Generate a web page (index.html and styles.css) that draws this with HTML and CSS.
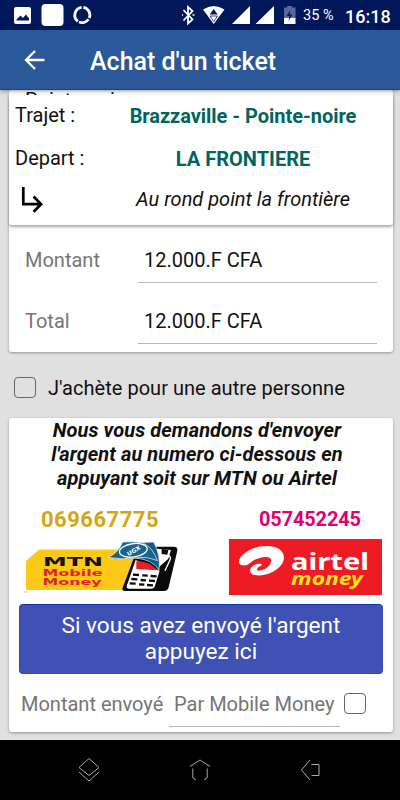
FILE: index.html
```html
<!DOCTYPE html>
<html lang="fr">

<head>
  <meta charset="UTF-8">
  <meta name="viewport" content="width=device-width, initial-scale=1.0">
  <title>Achat d'un ticket</title>
  <link rel="stylesheet" href="styles.css">
</head>

<body>
  <!-- Android status bar -->
  <div class="status-bar">
    <svg class="status-icons" width="100" height="30" viewBox="0 0 100 30">
      <rect x="14" y="7" width="17" height="17" rx="2" fill="#fff" />
      <path d="M16.5 20.500v-1l4-4 2.500 2.500 3-3.500 3 4v2z" fill="#00175a" />
      <rect x="41.500" y="4" width="22" height="22" rx="4" fill="#fff" />
      <g fill="none" stroke="#fff" stroke-width="2.800">
        <path d="M81.600 7.300A7.900 7.900 0 0 0 77.800 21.300" />
        <path d="M79 22A7.900 7.900 0 0 0 88.500 19.300" />
        <path d="M89.300 18A7.900 7.900 0 0 0 83.400 7.300" />
      </g>
    </svg>
    <svg class="status-icons right" width="118" height="30" viewBox="182 0 118 30">
      <path d="M183.500 10l9 9.500-4.500 4V7l4.500 4-9 9.500" fill="none" stroke="#fff" stroke-width="1.800" />
      <path d="M182 15h1M192.500 15h2" stroke="#fff" stroke-width="1.500" />
      <path d="M203 9.500Q213.700 2.500 224.500 9.500L213.700 24z" fill="#fff" />
      <path d="M213.700 9l4 5.500h-8z" fill="#00175a" />
      <path d="M210 16h7.500l-3.700 5.500z" fill="#fff" stroke="#00175a" stroke-width=".8" />
      <path d="M250 6v18h-18z M274 6v18h-18.500z" fill="#fff" />
      <path d="M284 7.500h3V6h5v1.500h3.500V18H284z" fill="#5a6797" />
      <path d="M284 18h11.500v6H284z" fill="#fff" />
      <path d="M290.500 10l-4 6h3l-1 5 4-6.500h-3z" fill="#00175a" />
    </svg>
    <span class="battery">35 %</span>
    <span class="clock">16:18</span>
  </div>

  <header class="app-bar">
    <svg width="22" height="22" viewBox="0 0 22 22">
      <path d="M20.500 11H2.500M11 2L2 11l9 9" fill="none" stroke="#fff" stroke-width="2.300" />
    </svg>
    <h1>Achat d'un ticket</h1>
  </header>

  <main>
    <!-- Trip summary that stays over the form -->
    <section class="trip">
      <div class="trip-row">
        <span class="trip-label">Trajet :</span>
        <strong class="route">Brazzaville - Pointe-noire</strong>
      </div>
      <div class="trip-row">
        <span class="trip-label">Depart :</span>
        <strong>LA FRONTIERE</strong>
      </div>
      <div class="trip-row last">
        <span class="trip-label">
          <svg width="28" height="28" viewBox="0 0 28 28">
            <path d="M8.300 2v17.200H26M18.600 11.500l7.500 7.700-7.500 7.600" fill="none" stroke="#000" stroke-width="2.700" />
          </svg>
        </span>
        <em>Au rond point la frontière</em>
      </div>
    </section>

    <section class="card form">
      <div class="destination">Pointe-noire</div>
      <div class="field">
        <label>Montant</label>
        <div class="value">12.000.F CFA</div>
      </div>
      <div class="field">
        <label>Total</label>
        <div class="value total">12.000.F CFA</div>
      </div>
    </section>

    <div class="other-person">
      <span class="checkbox"></span>
      <span class="other-text">J'achète pour une autre personne</span>
    </div>

    <section class="card payment">
      <p class="notice">
        Nous vous demandons d'envoyer<br>
        l'argent au numero ci-dessous en<br>
        appuyant soit sur MTN ou Airtel
      </p>
      <div class="operators">
        <div class="operator">
          <span class="mtn-number">069667775</span>
          <svg width="156" height="58" viewBox="24 538 156 58">
            <path d="M26 590V561l12-10.500q1-1 3-1h107v40.500z" fill="#fdc916" />
            <path d="M24 592h4" stroke="#ccc" />
            <g transform="translate(15 530) scale(.3333)">
              <!-- payment terminal -->
              <path d="M410 50h66q13 0 11 12l-26 110q-3 11-14 11H330q-10 0-7-10l32-85z" fill="#0a0a0a" />
              <path d="M362 90l72 32-14 45q-3 9-12 9h-64q-12 0-8-10z" fill="#fff" />
              <path d="M426 56l42 4-8 26-27 24-16-50z" fill="#fff" />
              <path d="M440 56l20 4-3 14-17-2z" fill="#0a0a0a" />
              <path d="M458 76q10 2 8 12l-16 34" stroke="#fff" stroke-width="4" fill="none" />
              <path d="M364 94q40-2 64 27l-64-4z" fill="#e9202b" />
              <path d="M354 134l18 1M382 136l16 1M407 138l18 1M349 147l18 1M377 150l16 1M402 152l18 1M344 160l18 1M372 163l16 1M396 165l18 1" stroke="#0a0a0a" stroke-width="7" />
              <!-- banknotes -->
              <path d="M360 38l56-2q22 40 16 84-20-32-72-36z" fill="#0f5c88" stroke="#fff" stroke-width="2" />
              <path d="M278 82q30-10 45-46 32-2 60 2 34 18 44 54-32-14-68-8-40 6-81-2z" fill="#17658f" stroke="#fff" stroke-width="2" />
              <ellipse cx="355" cy="61" rx="42" ry="20" fill="none" stroke="#fff" stroke-width="4" transform="rotate(-8 355 61)" />
              <text x="334" y="69" class="note-text" transform="rotate(-30 355 61)">UGX</text>
            </g>
            <text x="43" y="566" class="mtn-text" textLength="60" lengthAdjust="spacingAndGlyphs">MTN</text>
            <text x="42.500" y="575.700" class="mobile-text" textLength="60" lengthAdjust="spacingAndGlyphs">Mobile</text>
            <text x="42.500" y="585" class="mobile-text" textLength="59" lengthAdjust="spacingAndGlyphs">Money</text>
          </svg>
        </div>
        <div class="operator">
          <span class="airtel-number">057452245</span>
          <svg width="154" height="58" viewBox="229 538 154 58">
            <rect x="229" y="539" width="153" height="56" fill="#ed1c24" />
            <path transform="translate(215 530) scale(.3333)" d="M75 103C60 85 105 48 155 48C200 48 215 75 203 98C190 122 155 138 125 136C100 134 100 115 118 105C135 98 145 103 138 107C125 111 122 123 132 122C150 120 172 105 168 88C163 74 125 82 110 95C100 106 85 110 75 103Z" fill="#fff" />
            <text x="291" y="569.700" class="airtel-text" textLength="78" lengthAdjust="spacingAndGlyphs">airtel</text>
            <text x="291" y="585" class="money-text" textLength="72" lengthAdjust="spacingAndGlyphs">money</text>
          </svg>
        </div>
      </div>
      <button class="pay-button">Si vous avez envoyé l'argent<br>appuyez ici</button>
      <div class="sent">
        <span class="sent-label">Montant envoyé</span>
        <span class="sent-value">Par Mobile Money</span>
        <span class="checkbox"></span>
      </div>
    </section>
  </main>

  <!-- System navigation -->
  <nav>
    <svg width="24" height="26" viewBox="0 0 24 26">
      <path d="M12 1.500l10 9-10 8-10-8zM2 15l10 9 10-9" />
    </svg>
    <svg width="24" height="26" viewBox="0 0 24 26">
      <path d="M2 9.500l10-6.500 10 6.500M4.800 11.500V20q0 2 3 2.500M19.200 11.500V20q0 2-3 2.500" />
    </svg>
    <svg width="24" height="26" viewBox="0 0 24 26">
      <path d="M11 3L2.500 13l8.500 10M12.500 7.500H20v11h-7.500" />
    </svg>
  </nav>
</body>

</html>
```

FILE: styles.css
```css
* {
  box-sizing: border-box;
}

body {
  display: flex;
  flex-direction: column;
  width: 400px;
  height: 800px;
  margin: 0;
  overflow: hidden;
  background-color: #e0e0e0;
  color: #111;
  font-family: Roboto, sans-serif;
  font-size: 20px;
  white-space: nowrap;
}

svg {
  display: block;
}

.status-bar {
  display: flex;
  align-items: center;
  height: 30px;
  background-color: #00175a;
  color: white;
}

.status-icons.right {
  margin-left: 82px;
}

.battery {
  width: 31px;
  margin-left: 3px;
  font-size: 14.5px;
}

.clock {
  margin: 2px 0 0 11px;
  font-size: 18px;
  font-weight: 500;
}

.app-bar {
  display: flex;
  align-items: center;
  height: 60px;
  padding-left: 24px;
  border-bottom: 1px solid #0b4892;
  background-color: #2a5898;
  color: white;
  position: relative;
  box-shadow: 0 1px 4px rgba(0, 0, 0, 0.4);
  z-index: 3;
}

.app-bar h1 {
  margin: 3px 0 0 44px;
  font-size: 25px;
  font-weight: 500;
}

main {
  position: relative;
  height: 650px;
  padding: 0 7px 0 9px;
  overflow: hidden;
}

.card {
  background-color: white;
  border-radius: 3px;
  box-shadow: 0 1px 3px rgba(0, 0, 0, 0.35);
}

/* Trip summary */
.trip {
  position: absolute;
  top: 5px;
  left: 9px;
  z-index: 2;
  width: 384px;
  height: 130px;
  padding-top: 3px;
  background-color: white;
  border-radius: 3px;
  box-shadow: 0 2px 3px rgba(0, 0, 0, 0.35);
}

.trip-row {
  display: flex;
  align-items: center;
  height: 33px;
  padding-left: 6px;
}

.trip-row:nth-child(2) {
  height: 54px;
}

.trip-row.last {
  height: 28px;
}

.trip-label {
  width: 106px;
}

.trip-row strong,
.trip-row em {
  flex: 1;
  margin-right: 28px;
  text-align: center;
}

.trip-row strong {
  padding-top: 2px;
  color: #00645f;
  font-weight: 700;
}

.route {
  letter-spacing: -0.04px;
}

/* Amount form */
.form {
  height: 262px;
  padding: 0 16px;
}

.destination {
  height: 139px;
  line-height: 20px;
}

.field {
  display: flex;
  height: 61px;
  align-items: flex-start;
}

.field label {
  width: 113px;
  line-height: 62px;
  color: #757575;
}

.value {
  flex: 1;
  height: 54px;
  padding-left: 6px;
  border-bottom: 1px solid #b0b8b8;
  line-height: 62px;
}

.other-person {
  display: flex;
  align-items: center;
  height: 66px;
  padding: 5px 0 0 5px;
  gap: 12px;
}

.other-text {
  letter-spacing: 0.03px;
}

.checkbox {
  width: 22px;
  height: 21px;
  border: 1px solid #666;
  border-radius: 4px;
}

/* Payment */
.payment {
  height: 314px;
}

.notice {
  margin: 0;
  padding-right: 8px;
  text-align: center;
  line-height: 24px;
  font-weight: 700;
  font-style: italic;
  letter-spacing: 0.07px;
}

.operators {
  display: flex;
  justify-content: space-between;
  height: 114px;
  padding: 16px 10px 0 15px;
}

.operator {
  display: flex;
  flex-direction: column;
}

.mtn-number,
.airtel-number {
  height: 32px;
  line-height: 28px;
  font-weight: 700;
}

.mtn-number {
  padding-left: 17px;
  color: #d2a713;
  font-size: 22px;
  letter-spacing: 0.5px;
}

.airtel-number {
  padding-left: 30px;
  line-height: 26px;
  color: #e3006d;
  letter-spacing: -0.15px;
}

.mtn-text,
.mobile-text {
  font: bold 13px "DejaVu Sans", sans-serif;
  fill: #111;
}

.mobile-text {
  font-size: 9px;
  fill: #e31e2b;
}

.note-text {
  font: bold 18px "DejaVu Sans", sans-serif;
  fill: white;
}

.airtel-text {
  font: bold 24px "Noto Sans", sans-serif;
  fill: white;
}

.money-text {
  font: italic bold 17px "Noto Sans", sans-serif;
  fill: #ffe21a;
}

.pay-button {
  display: block;
  width: 364px;
  height: 70px;
  margin: 0 0 0 10px;
  padding: 0;
  background-color: #3f51b5;
  color: white;
  border: 1px solid #3148b5;
  border-top-color: #1937a8;
  border-radius: 4px;
  font-family: Roboto, sans-serif;
  font-size: 22.6px;
  line-height: 26px;
}

.sent {
  display: flex;
  align-items: flex-start;
  padding: 0 0 0 12px;
  color: #757575;
}

.sent-label {
  width: 148px;
  line-height: 61px;
}

.sent-value {
  width: 171px;
  height: 53px;
  padding-left: 5px;
  border-bottom: 1px solid #b0b8b8;
  line-height: 61px;
}

.sent .checkbox {
  margin: 19px 0 0 4px;
}

/* System navigation */
nav {
  display: flex;
  align-items: center;
  justify-content: space-between;
  height: 60px;
  padding: 0 77px;
  background-color: black;
}

nav path {
  fill: none;
  stroke: #aaa;
  stroke-width: 1;
}
```
